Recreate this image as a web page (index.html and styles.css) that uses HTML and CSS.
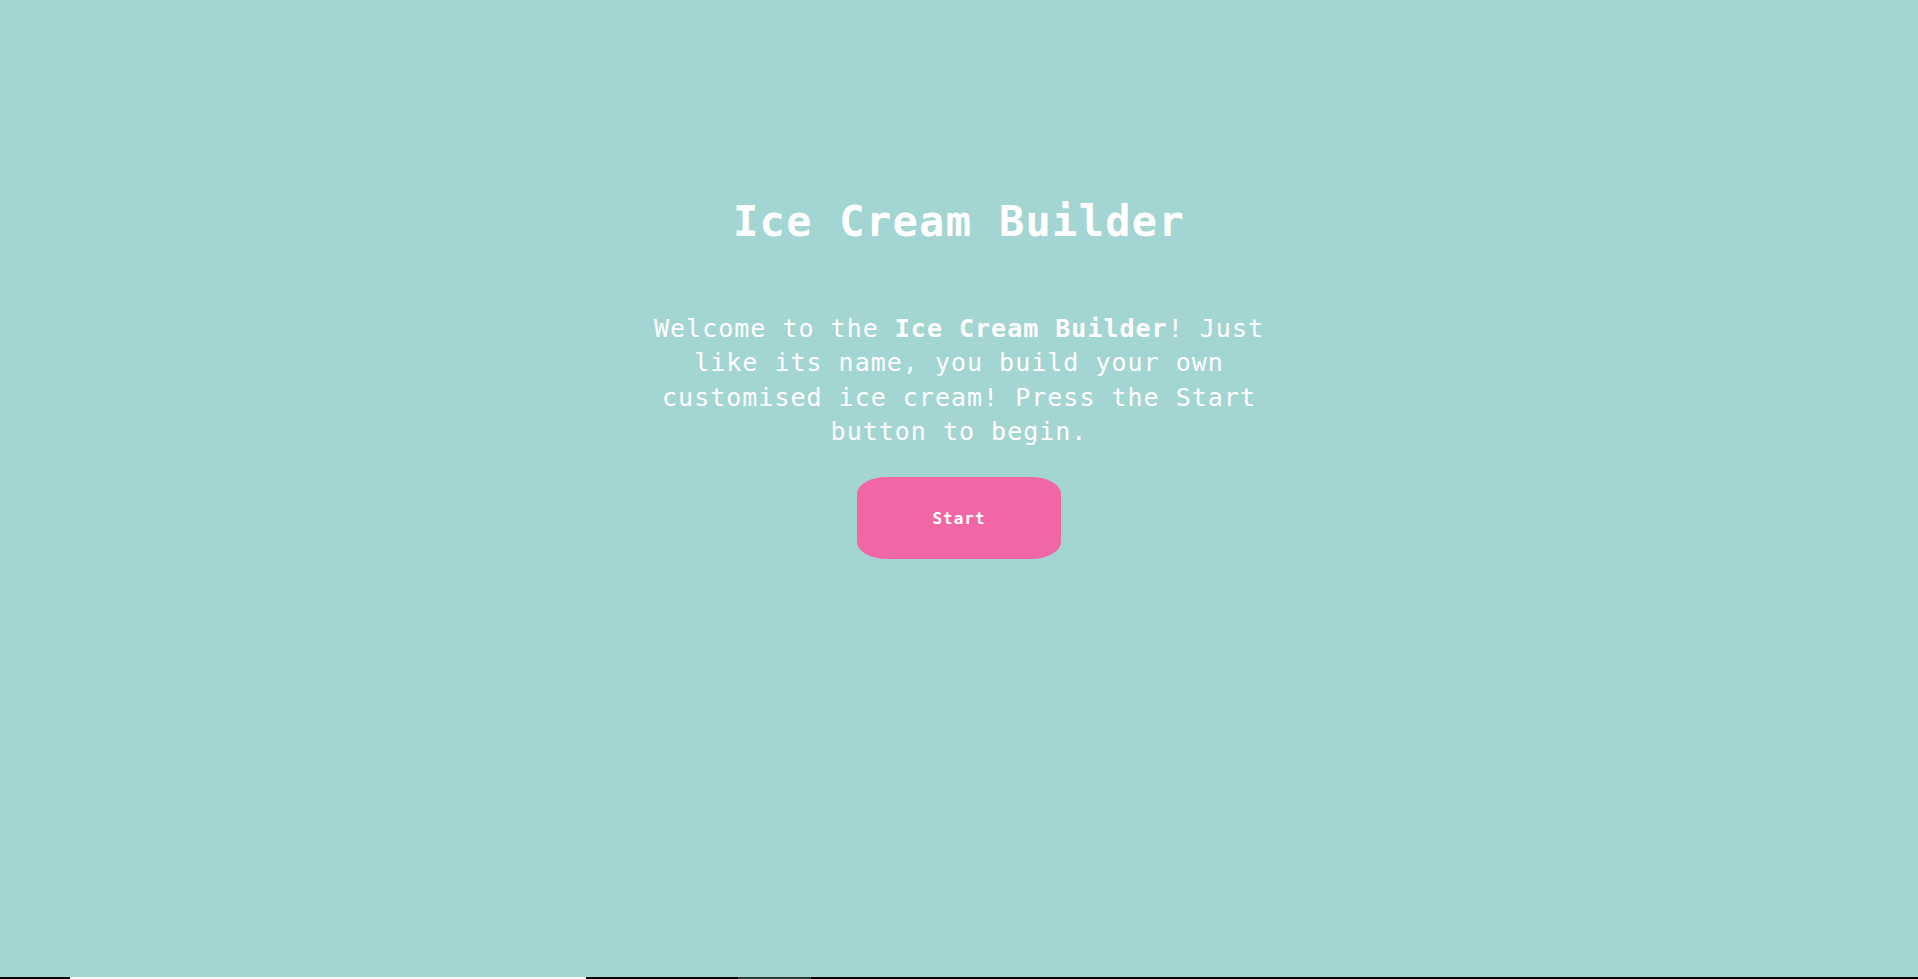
FILE: index.html
```html
<!DOCTYPE html>
<html lang="en">
<head>
<meta charset="utf-8">
<title>Ice Cream Builder</title>
<link rel="stylesheet" href="styles.css">
</head>
<body>
<div class="page">
  <main class="intro">
    <h1 class="title">Ice Cream Builder</h1>
    <p class="welcome">Welcome to the <b>Ice Cream Builder</b>! Just like its name, you build your own customised ice cream! Press the Start button to begin.</p>
    <button class="start-btn" type="button">Start</button>
  </main>
  <div class="strip">
    <span class="seg seg-black seg-a"></span>
    <span class="seg seg-white"></span>
    <span class="seg seg-black seg-b"></span>
    <span class="seg seg-gray"></span>
    <span class="seg seg-black seg-rest"></span>
  </div>
</div>
</body>
</html>
```

FILE: styles.css
```css
html, body {
  margin: 0;
  padding: 0;
}

body {
  background: #a3d5d3;
  color: #ffffff;
  font-family: "DejaVu Sans Mono", "Liberation Mono", monospace;
}

.page {
  height: 979px;
  display: flex;
  flex-direction: column;
}

.intro {
  flex: 1;
  display: flex;
  flex-direction: column;
  align-items: center;
  padding-top: 197px;
}

.title {
  margin: 0;
  font-size: 42px;
  line-height: 50px;
  font-weight: bold;
  letter-spacing: 1.3px;
  text-align: center;
}

.welcome {
  margin: 65px 0 0;
  width: 650px;
  font-size: 25px;
  line-height: 34.3px;
  letter-spacing: 1px;
  text-align: center;
}

.welcome b {
  font-weight: bold;
}

.start-btn {
  margin-top: 28px;
  width: 204px;
  height: 82px;
  border: none;
  border-radius: 30px / 17px;
  background: #f166a4;
  color: #ffffff;
  font-family: "DejaVu Sans Mono", "Liberation Mono", monospace;
  font-size: 16px;
  font-weight: bold;
  letter-spacing: 1px;
  display: flex;
  align-items: center;
  justify-content: center;
  padding: 0;
  cursor: pointer;
}

.strip {
  height: 2px;
  display: flex;
}

.seg {
  display: block;
  height: 2px;
}

.seg-black { background: #000000; }
.seg-white { background: #f4f6f6; width: 516px; }
.seg-gray { background: #2b3b3a; width: 73px; }
.seg-a { width: 70px; }
.seg-b { width: 152px; }
.seg-rest { flex: 1; }
```
